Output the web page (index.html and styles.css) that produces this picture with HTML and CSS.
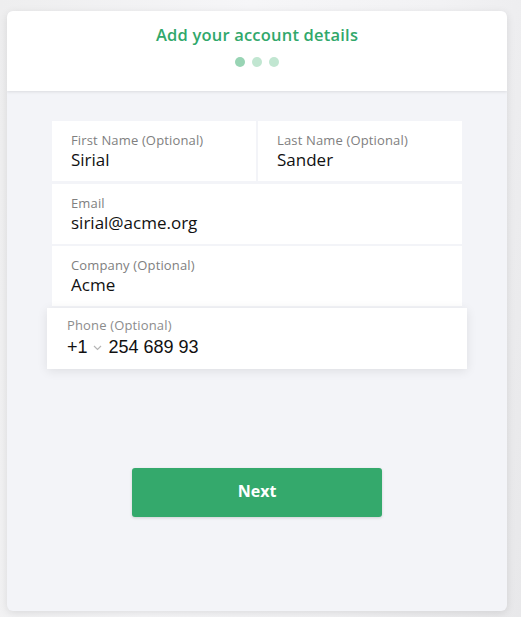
FILE: index.html
```html
<!DOCTYPE html>
<html>
<head>
<meta charset="utf-8">
<link rel="stylesheet" href="styles.css">
</head>
<body>
<div class="card">
  <div class="header">
    <h1 class="title">Add your account details</h1>
    <div class="dots">
      <span class="dot active"></span>
      <span class="dot"></span>
      <span class="dot"></span>
    </div>
  </div>
  <div class="body">
    <div class="form">
      <div class="row split">
        <div class="cell">
          <div class="label">First Name (Optional)</div>
          <div class="value">Sirial</div>
        </div>
        <div class="cell">
          <div class="label">Last Name (Optional)</div>
          <div class="value">Sander</div>
        </div>
      </div>
      <div class="row">
        <div class="cell">
          <div class="label">Email</div>
          <div class="value">sirial@acme.org</div>
        </div>
      </div>
      <div class="row">
        <div class="cell">
          <div class="label">Company (Optional)</div>
          <div class="value">Acme</div>
        </div>
      </div>
      <div class="row phone">
        <div class="cell">
          <div class="label">Phone (Optional)</div>
          <div class="value phone-value">
            <span class="code">+1</span>
            <svg class="chev" width="9" height="6" viewBox="0 0 9 6"><path d="M1 1 L4.5 4.5 L8 1" fill="none" stroke="#b5b5b5" stroke-width="1.2"/></svg>
            <span>254 689 93</span>
          </div>
        </div>
      </div>
    </div>
    <div class="actions">
      <button class="next">Next</button>
    </div>
  </div>
</div>
</body>
</html>
```
FILE: styles.css
```css
html, body {
  margin: 0;
  height: 100%;
}
body {
  background: linear-gradient(100deg, #eeeeef 0%, #f6f6f8 40%, #f2f2f4 70%, #e8e8ea 100%);
  padding: 11px 14px 6px 7px;
  box-sizing: border-box;
  font-family: "Open Sans", "Noto Sans", sans-serif;
}
.card {
  width: 500px;
  height: 600px;
  border-radius: 6px;
  overflow: hidden;
  background: #f3f4f8;
  box-shadow: 0 2px 8px rgba(0,0,0,0.10);
  display: flex;
  flex-direction: column;
}
.header {
  background: #fff;
  height: 80px;
  box-sizing: border-box;
  padding-top: 14px;
  display: flex;
  flex-direction: column;
  align-items: center;
  box-shadow: 0 1px 3px rgba(0,0,0,0.10);
  position: relative;
  z-index: 1;
}
.title {
  margin: 0;
  font-size: 16.5px;
  line-height: 20px;
  font-weight: 600;
  color: #31a86b;
  letter-spacing: 0.2px;
}
.dots {
  display: flex;
  gap: 7px;
  margin-top: 12px;
}
.dot {
  width: 10px;
  height: 10px;
  border-radius: 50%;
  background: #c1e6d1;
}
.dot.active {
  background: #98d4b4;
}
.body {
  flex: 1;
  padding: 30px 45px 0;
  display: flex;
  flex-direction: column;
}
.form {
  display: flex;
  flex-direction: column;
  gap: 2px;
}
.row {
  display: flex;
  gap: 2px;
  height: 60px;
}
.row.split {
  margin-bottom: 1px;
}
.cell {
  flex: 1;
  background: #fff;
  padding: 11px 19px 0;
  box-sizing: border-box;
}
.label {
  font-size: 13px;
  line-height: 16px;
  font-weight: 400;
  letter-spacing: 0.15px;
  color: #808080;
}
.value {
  font-size: 17px;
  line-height: 22px;
  color: #111;
  margin-top: 1px;
}
.row.phone {
  height: 61px;
  margin: 0 -5px;
  box-shadow: 0 2px 10px rgba(0,0,0,0.09);
  position: relative;
}
.row.phone .cell {
  padding: 9px 20px 0;
}
.row.phone .label {
  color: #8c8c8c;
}
.phone-value {
  font-family: "Liberation Sans", Arial, sans-serif;
  font-size: 18px;
  line-height: 24px;
  margin-top: 2px;
  display: flex;
  align-items: center;
}
.chev {
  margin: 2px 7px 0 5px;
}
.actions {
  display: flex;
  justify-content: center;
  margin-top: 99px;
}
.next {
  width: 250px;
  height: 49px;
  border: none;
  border-radius: 3px;
  background: #34a96c;
  color: #fff;
  font-family: "Open Sans", "Noto Sans", sans-serif;
  font-size: 16px;
  font-weight: 700;
  padding: 0 0 4px;
  box-shadow: 0 1px 3px rgba(0,0,0,0.15);
}
```
